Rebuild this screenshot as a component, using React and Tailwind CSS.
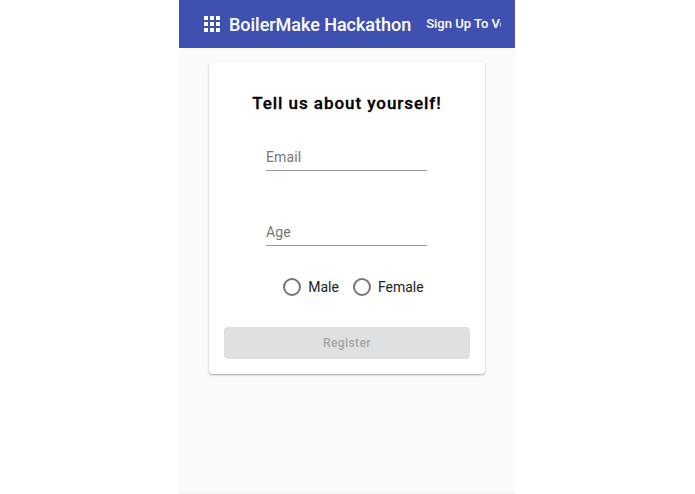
import React from 'react';

const GridIcon = () => (
  <svg width="24" height="24" viewBox="0 0 24 24" fill="#fff" className="shrink-0">
    <path d="M4 8h4V4H4v4zm6 12h4v-4h-4v4zm-6 0h4v-4H4v4zm0-6h4v-4H4v4zm6 0h4v-4h-4v4zm6-10v4h4V4h-4zm-6 4h4V4h-4v4zm6 6h4v-4h-4v4zm0 6h4v-4h-4v4z" />
  </svg>
);

const Field = ({ label }) => (
  <div className="w-[161px] -ml-px h-[27px] border-b border-[#9a9a9a] text-[14px] leading-[26px] text-[#757575] tracking-[0.15px]">
    {label}
  </div>
);

const Radio = ({ label }) => (
  <div className="flex items-center gap-[7px]">
    <span className="w-[18px] h-[18px] rounded-full border-2 border-[#757575]" />
    <span className="text-[14px] leading-5 text-[#212121]">{label}</span>
  </div>
);

export default function App() {
  return (
    <div className="h-[494px] bg-white overflow-hidden font-['Roboto',sans-serif]">
      <div className="w-[336px] h-[494px] ml-[179px] bg-[#fafafa] flex flex-col border-b border-[#f1f1f1]">
        <header className="h-12 shrink-0 bg-[#3f51b0] flex items-center pl-[21px] text-white">
          <GridIcon />
          <span className="ml-[5px] text-[18px] font-medium whitespace-nowrap -tracking-[0.03px]">BoilerMake Hackathon</span>
          <div className="ml-[15px] w-[75px] overflow-hidden whitespace-nowrap text-[13px] font-medium">Sign Up To Vote</div>
        </header>
        <div className="mx-[30px] mt-[14px] w-[276px] h-[312px] bg-white rounded-[4px] shadow-[0_1px_2px_rgba(0,0,0,0.35)] flex flex-col items-center">
          <h1 className="mt-[31px] text-[17px] leading-[21px] font-medium text-black tracking-[0.95px] [-webkit-text-stroke:0.3px_black]">Tell us about yourself!</h1>
          <div className="mt-[30px]"><Field label="Email" /></div>
          <div className="mt-[48px]"><Field label="Age" /></div>
          <div className="mt-[31px] ml-[13px] flex gap-[14px]">
            <Radio label="Male" />
            <Radio label="Female" />
          </div>
          <button className="mt-[30px] w-[246px] h-8 rounded-[4px] bg-[#e0e0e0] text-[12px] text-[#a6a6a6] tracking-[0.4px] font-medium leading-[30px]">Register</button>
        </div>
      </div>
    </div>
  );
}
